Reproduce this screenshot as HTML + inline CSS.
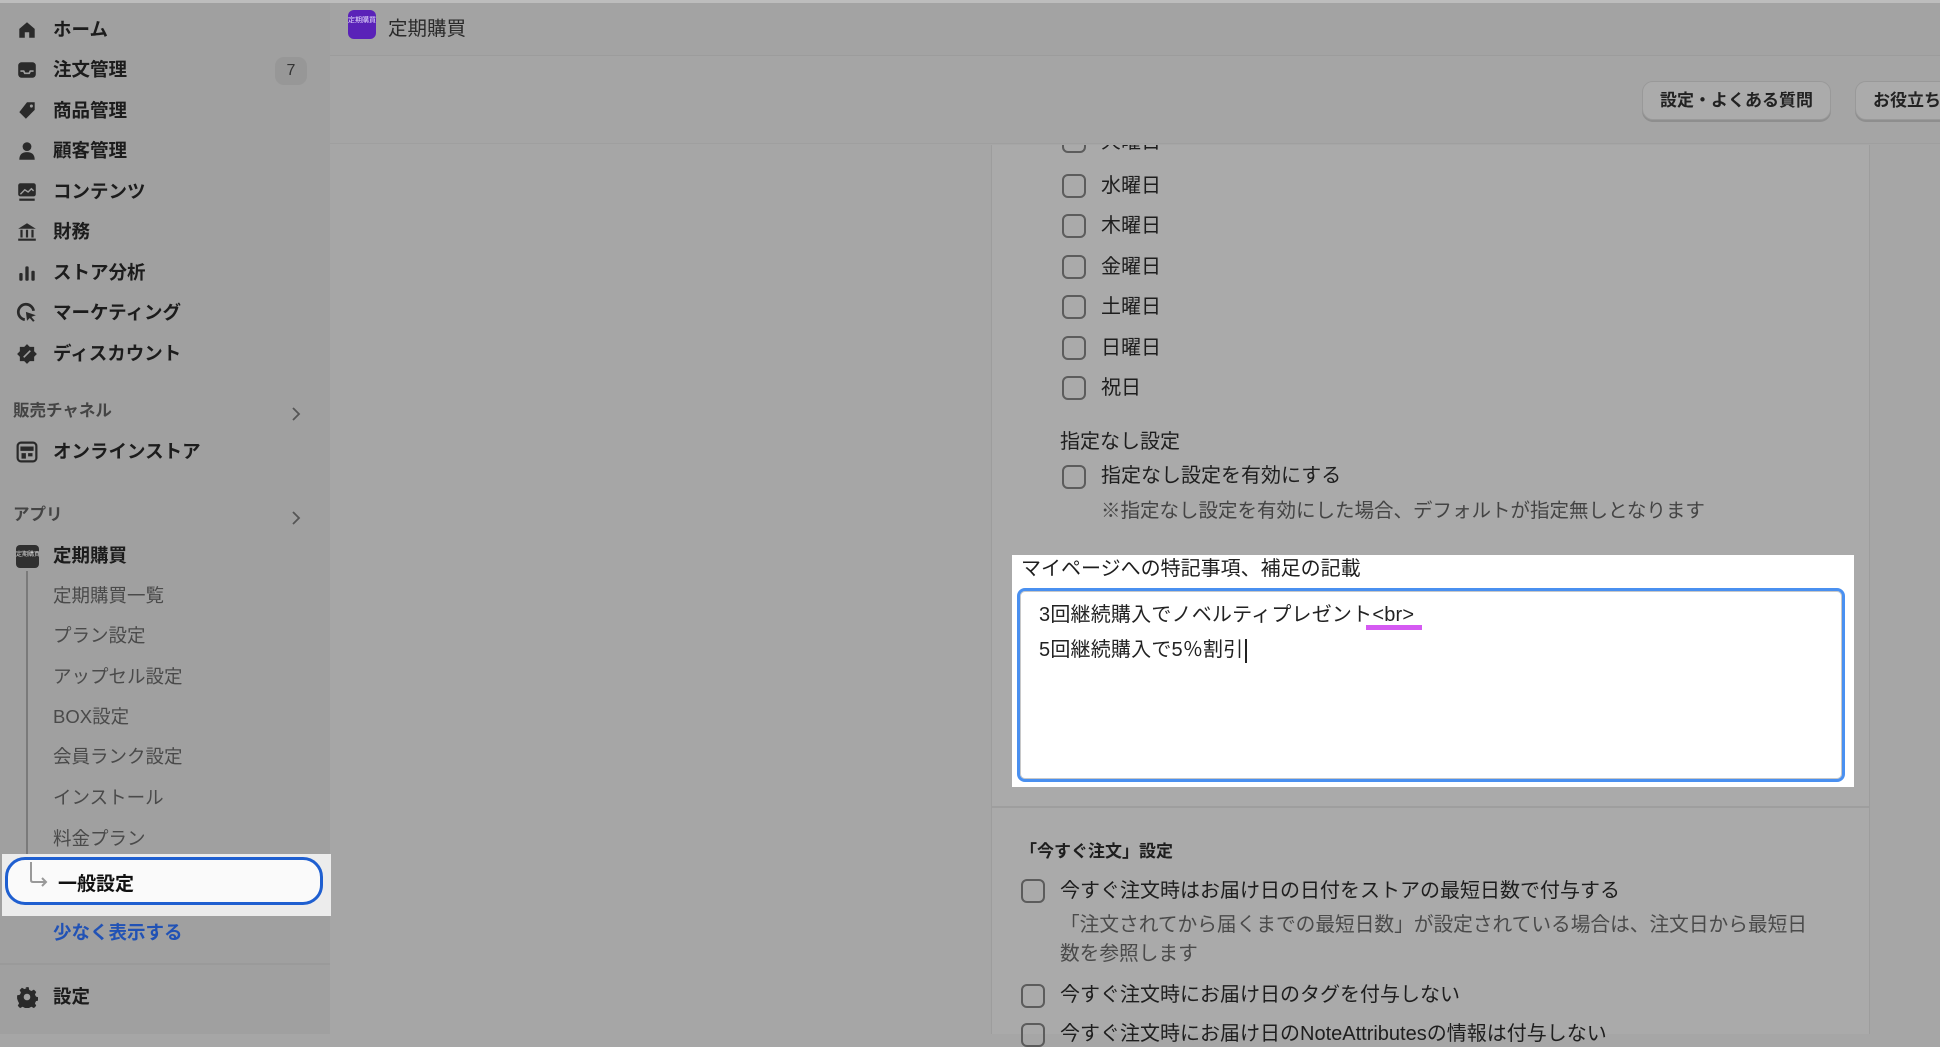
<!DOCTYPE html>
<html><head><meta charset="utf-8"><style>
*{margin:0;padding:0;box-sizing:border-box}
body{width:1940px;height:1034px;overflow:hidden;background:#a6a6a6;font-family:"Liberation Sans","Noto Sans CJK JP",sans-serif;color:#1e1e1e;position:relative}
.a{position:absolute;white-space:nowrap}
.nav{font-size:18.5px;font-weight:600;color:#1c1c1c;left:53px;line-height:24px}
.ic{position:absolute;left:16px;width:22px;height:22px}
.sub{font-size:18.5px;color:#4a4a4a;left:53px;line-height:24px}
.sec{font-size:16.5px;color:#444;left:13px;font-weight:600;line-height:22px}
.chev{position:absolute;left:290px;width:12px;height:14px}
.cb{position:absolute;width:24px;height:24px;border:2.5px solid #5c5c5c;border-radius:6px}
.t{font-size:20px;color:#1e1e1e;line-height:26px}
</style></head><body>
<div class="a" style="left:0;top:0;width:330px;height:1034px;background:#a0a0a0"></div>
<div class="a" style="left:0;top:0;width:1940px;height:3px;background:#bdbdbd"></div>
<svg class="ic" style="top:19px" viewBox="0 0 20 20"><path d="M3 9 L10 3 L17 9 V17 H12 V12 H8 V17 H3Z" fill="#2a2a2a"/></svg>
<svg class="ic" style="top:59px" viewBox="0 0 20 20"><rect x="2" y="3" width="16" height="14" rx="3" fill="#2a2a2a"/><path d="M4 11h3l1 2h4l1-2h3" stroke="#a0a0a0" stroke-width="1.5" fill="none"/></svg>
<svg class="ic" style="top:100px" viewBox="0 0 20 20"><path d="M10 2 H17 V9 L9 17 L3 11Z" fill="#2a2a2a"/><circle cx="14" cy="5.5" r="1.4" fill="#a0a0a0"/></svg>
<svg class="ic" style="top:140px" viewBox="0 0 20 20"><circle cx="10" cy="6" r="4" fill="#2a2a2a"/><path d="M3 18 Q3 11 10 11 Q17 11 17 18Z" fill="#2a2a2a"/></svg>
<svg class="ic" style="top:181px" viewBox="0 0 20 20"><rect x="2" y="2" width="16" height="12" rx="2" fill="#2a2a2a"/><path d="M4 12 L8 8 L11 10 L14 7 L16 9" stroke="#a0a0a0" stroke-width="1.3" fill="none"/><rect x="3" y="16" width="14" height="2" fill="#2a2a2a"/></svg>
<svg class="ic" style="top:221px" viewBox="0 0 20 20"><path d="M2 7 L10 2 L18 7Z M2 16h16v2H2z M4 8h2v7H4z M9 8h2v7H9z M14 8h2v7h-2z" fill="#2a2a2a"/></svg>
<svg class="ic" style="top:262px" viewBox="0 0 20 20"><rect x="3" y="10" width="3" height="7" rx="1" fill="#2a2a2a"/><rect x="8.5" y="4" width="3" height="13" rx="1" fill="#2a2a2a"/><rect x="14" y="8" width="3" height="9" rx="1" fill="#2a2a2a"/></svg>
<svg class="ic" style="top:302px" viewBox="0 0 20 20"><path d="M16 8 A7 7 0 1 0 8 16" stroke="#2a2a2a" stroke-width="2.5" fill="none"/><path d="M9 9 L18 12 L14 13.5 L17 17 L15.5 18 L12.5 14.5 L10 17Z" fill="#2a2a2a"/></svg>
<svg class="ic" style="top:343px" viewBox="0 0 20 20"><path d="M10 1 L12.5 3.5 H16.5 V7.5 L19 10 L16.5 12.5 V16.5 H12.5 L10 19 L7.5 16.5 H3.5 V12.5 L1 10 L3.5 7.5 V3.5 H7.5Z" fill="#2a2a2a"/><path d="M7 13 L13 7" stroke="#a0a0a0" stroke-width="1.5"/></svg>
<div class="a nav" style="top:18px">ホーム</div>
<div class="a nav" style="top:58px">注文管理</div>
<div class="a" style="left:275px;top:57px;width:32px;height:28px;border-radius:9px;background:#979797;font-size:16px;text-align:center;line-height:28px;color:#333">7</div>
<div class="a nav" style="top:99px">商品管理</div>
<div class="a nav" style="top:139px">顧客管理</div>
<div class="a nav" style="top:180px">コンテンツ</div>
<div class="a nav" style="top:220px">財務</div>
<div class="a nav" style="top:261px">ストア分析</div>
<div class="a nav" style="top:301px">マーケティング</div>
<div class="a nav" style="top:342px">ディスカウント</div>
<div class="a sec" style="top:400px">販売チャネル</div>
<svg class="chev" style="top:407px" viewBox="0 0 12 14"><path d="M3 1 L9 7 L3 13" stroke="#555" stroke-width="1.8" fill="none"/></svg>
<svg class="ic" style="top:441px" viewBox="0 0 20 20"><rect x="1.5" y="1.5" width="17" height="17" rx="3" stroke="#2a2a2a" stroke-width="2" fill="none"/><path d="M4 5h12v4H4z M5 11h4v5H5z M11 11h4v3h-4z" fill="#2a2a2a"/></svg>
<div class="a nav" style="top:440px">オンラインストア</div>
<div class="a sec" style="top:504px">アプリ</div>
<svg class="chev" style="top:511px" viewBox="0 0 12 14"><path d="M3 1 L9 7 L3 13" stroke="#555" stroke-width="1.8" fill="none"/></svg>
<div class="a" style="left:16px;top:545px;width:23px;height:23px;border-radius:4px;background:#303030;color:#ddd;font-size:6px;line-height:20px;text-align:center;overflow:hidden">定期購買</div>
<div class="a nav" style="top:544px">定期購買</div>
<div class="a" style="left:26px;top:571px;width:2px;height:302px;background:#7a7a7a"></div>
<div class="a sub" style="top:584px">定期購買一覧</div>
<div class="a sub" style="top:624px">プラン設定</div>
<div class="a sub" style="top:665px">アップセル設定</div>
<div class="a sub" style="top:705px">BOX設定</div>
<div class="a sub" style="top:745px">会員ランク設定</div>
<div class="a sub" style="top:786px">インストール</div>
<div class="a sub" style="top:827px">料金プラン</div>
<div class="a" style="left:2px;top:854px;width:329px;height:62px;background:#ececec"></div>
<div class="a" style="left:5px;top:857px;width:318px;height:48px;border:3px solid #1f5fd0;border-radius:20px;background:#fafafa"></div>
<svg class="a" style="left:26px;top:862px" width="24" height="26" viewBox="0 0 24 26"><path d="M5 0 V18 Q5 20 7 20 H20 M16 16 L20 20 L16 24" stroke="#999" stroke-width="2" fill="none"/></svg>
<div class="a" style="left:58px;top:869px;font-size:19px;font-weight:600;color:#111">一般設定</div>
<div class="a" style="left:53px;top:919px;font-size:18.5px;font-weight:600;color:#2152b5">少なく表示する</div>
<div class="a" style="left:0;top:963px;width:330px;height:2px;background:#9a9a9a"></div>
<svg class="ic" style="top:986px" viewBox="0 0 20 20"><path d="M8.5 1h3l.5 2.5 2 1 2.3-1.2 2.1 2.1-1.2 2.3 1 2 2.5.5v3l-2.5.5-1 2 1.2 2.3-2.1 2.1-2.3-1.2-2 1-.5 2.5h-3l-.5-2.5-2-1-2.3 1.2-2.1-2.1 1.2-2.3-1-2L1 11.5v-3l2.5-.5 1-2-1.2-2.3 2.1-2.1 2.3 1.2 2-1z" fill="#2a2a2a"/><circle cx="10" cy="10" r="3" fill="#a0a0a0"/></svg>
<div class="a nav" style="top:985px">設定</div>

<div class="a" style="left:330px;top:3px;width:1610px;height:53px;background:#a3a3a3;border-bottom:1px solid #9c9c9c"></div>
<div class="a" style="left:348px;top:10px;width:28px;height:29px;border-radius:6px;background:#5a22b8;color:#e8e0ff;font-size:7px;line-height:22px;text-align:center;overflow:hidden">定期購買</div>
<div class="a" style="left:388px;top:12px;font-size:19.5px;color:#2a2a2a">定期購買</div>
<div class="a" style="left:330px;top:56px;width:1610px;height:88px;background:#a5a5a5;border-bottom:1px solid #9f9f9f"></div>
<div class="a" style="left:1642px;top:81px;width:189px;height:39px;border-radius:11px;background:#ababab;border:1px solid #999;box-shadow:0 2px 0 #8e8e8e;font-size:17px;font-weight:600;color:#222;text-align:center;line-height:37px">設定・よくある質問</div>
<div class="a" style="left:1855px;top:81px;width:120px;height:39px;border-radius:11px;background:#ababab;border:1px solid #999;box-shadow:0 2px 0 #8e8e8e;font-size:17px;font-weight:600;color:#222;line-height:37px;padding-left:17px">お役立ち</div>

<div class="a" style="left:991px;top:145px;width:879px;height:889px;background:#aaaaaa;border-left:1px solid #9d9d9d;border-right:1px solid #9d9d9d"></div>
<div class="a" style="left:991px;top:145px;width:879px;height:10px;overflow:hidden"><div class="cb" style="left:71px;top:-16px"></div><div class="a t" style="left:110px;top:-16px">火曜日</div></div>
<div class="cb" style="left:1062px;top:174px"></div><div class="a t" style="left:1101px;top:173px">水曜日</div>
<div class="cb" style="left:1062px;top:214px"></div><div class="a t" style="left:1101px;top:213px">木曜日</div>
<div class="cb" style="left:1062px;top:255px"></div><div class="a t" style="left:1101px;top:254px">金曜日</div>
<div class="cb" style="left:1062px;top:295px"></div><div class="a t" style="left:1101px;top:294px">土曜日</div>
<div class="cb" style="left:1062px;top:336px"></div><div class="a t" style="left:1101px;top:335px">日曜日</div>
<div class="cb" style="left:1062px;top:376px"></div><div class="a t" style="left:1101px;top:375px">祝日</div>
<div class="a t" style="left:1060px;top:429px">指定なし設定</div>
<div class="cb" style="left:1062px;top:465px"></div><div class="a t" style="left:1101px;top:463px">指定なし設定を有効にする</div>
<div class="a t" style="left:1101px;top:498px;color:#444;font-size:19.5px">※指定なし設定を有効にした場合、デフォルトが指定無しとなります</div>

<div class="a" style="left:1012px;top:555px;width:842px;height:232px;background:#fff"></div>
<div class="a t" style="left:1021px;top:556px">マイページへの特記事項、補足の記載</div>
<div class="a" style="left:1017px;top:588px;width:828px;height:194px;border:3px solid #4a90f0;border-radius:8px;background:#fff;box-shadow:inset 0 0 0 1px #c8c8c8"></div>
<div class="a" style="left:1039px;top:602px;font-size:20px;color:#222;line-height:26px;letter-spacing:0.2px">3回継続購入でノベルティプレゼント<span style="position:relative">&lt;br&gt;<span style="position:absolute;left:-6px;right:-8px;bottom:-4px;height:5px;background:#d55af2"></span></span></div>
<div class="a" style="left:1039px;top:637px;font-size:20px;color:#222;line-height:26px;letter-spacing:0.2px">5回継続購入で5％割引<span style="display:inline-block;width:2px;height:24px;background:#222;vertical-align:middle;margin-left:2px"></span></div>

<div class="a" style="left:992px;top:806px;width:877px;height:2px;background:#9e9e9e"></div>
<div class="a" style="left:1020px;top:837px;font-size:17px;font-weight:700;color:#1e1e1e">「今すぐ注文」設定</div>
<div class="cb" style="left:1021px;top:879px"></div><div class="a t" style="left:1060px;top:878px">今すぐ注文時はお届け日の日付をストアの最短日数で付与する</div>
<div class="a t" style="left:1060px;top:912px;color:#4a4a4a;font-size:19.7px">「注文されてから届くまでの最短日数」が設定されている場合は、注文日から最短日</div>
<div class="a t" style="left:1060px;top:941px;color:#4a4a4a;font-size:19.7px">数を参照します</div>
<div class="cb" style="left:1021px;top:984px"></div><div class="a t" style="left:1060px;top:982px">今すぐ注文時にお届け日のタグを付与しない</div>
<div class="cb" style="left:1021px;top:1023px"></div><div class="a t" style="left:1060px;top:1021px">今すぐ注文時にお届け日のNoteAttributesの情報は付与しない</div>
</body></html>
